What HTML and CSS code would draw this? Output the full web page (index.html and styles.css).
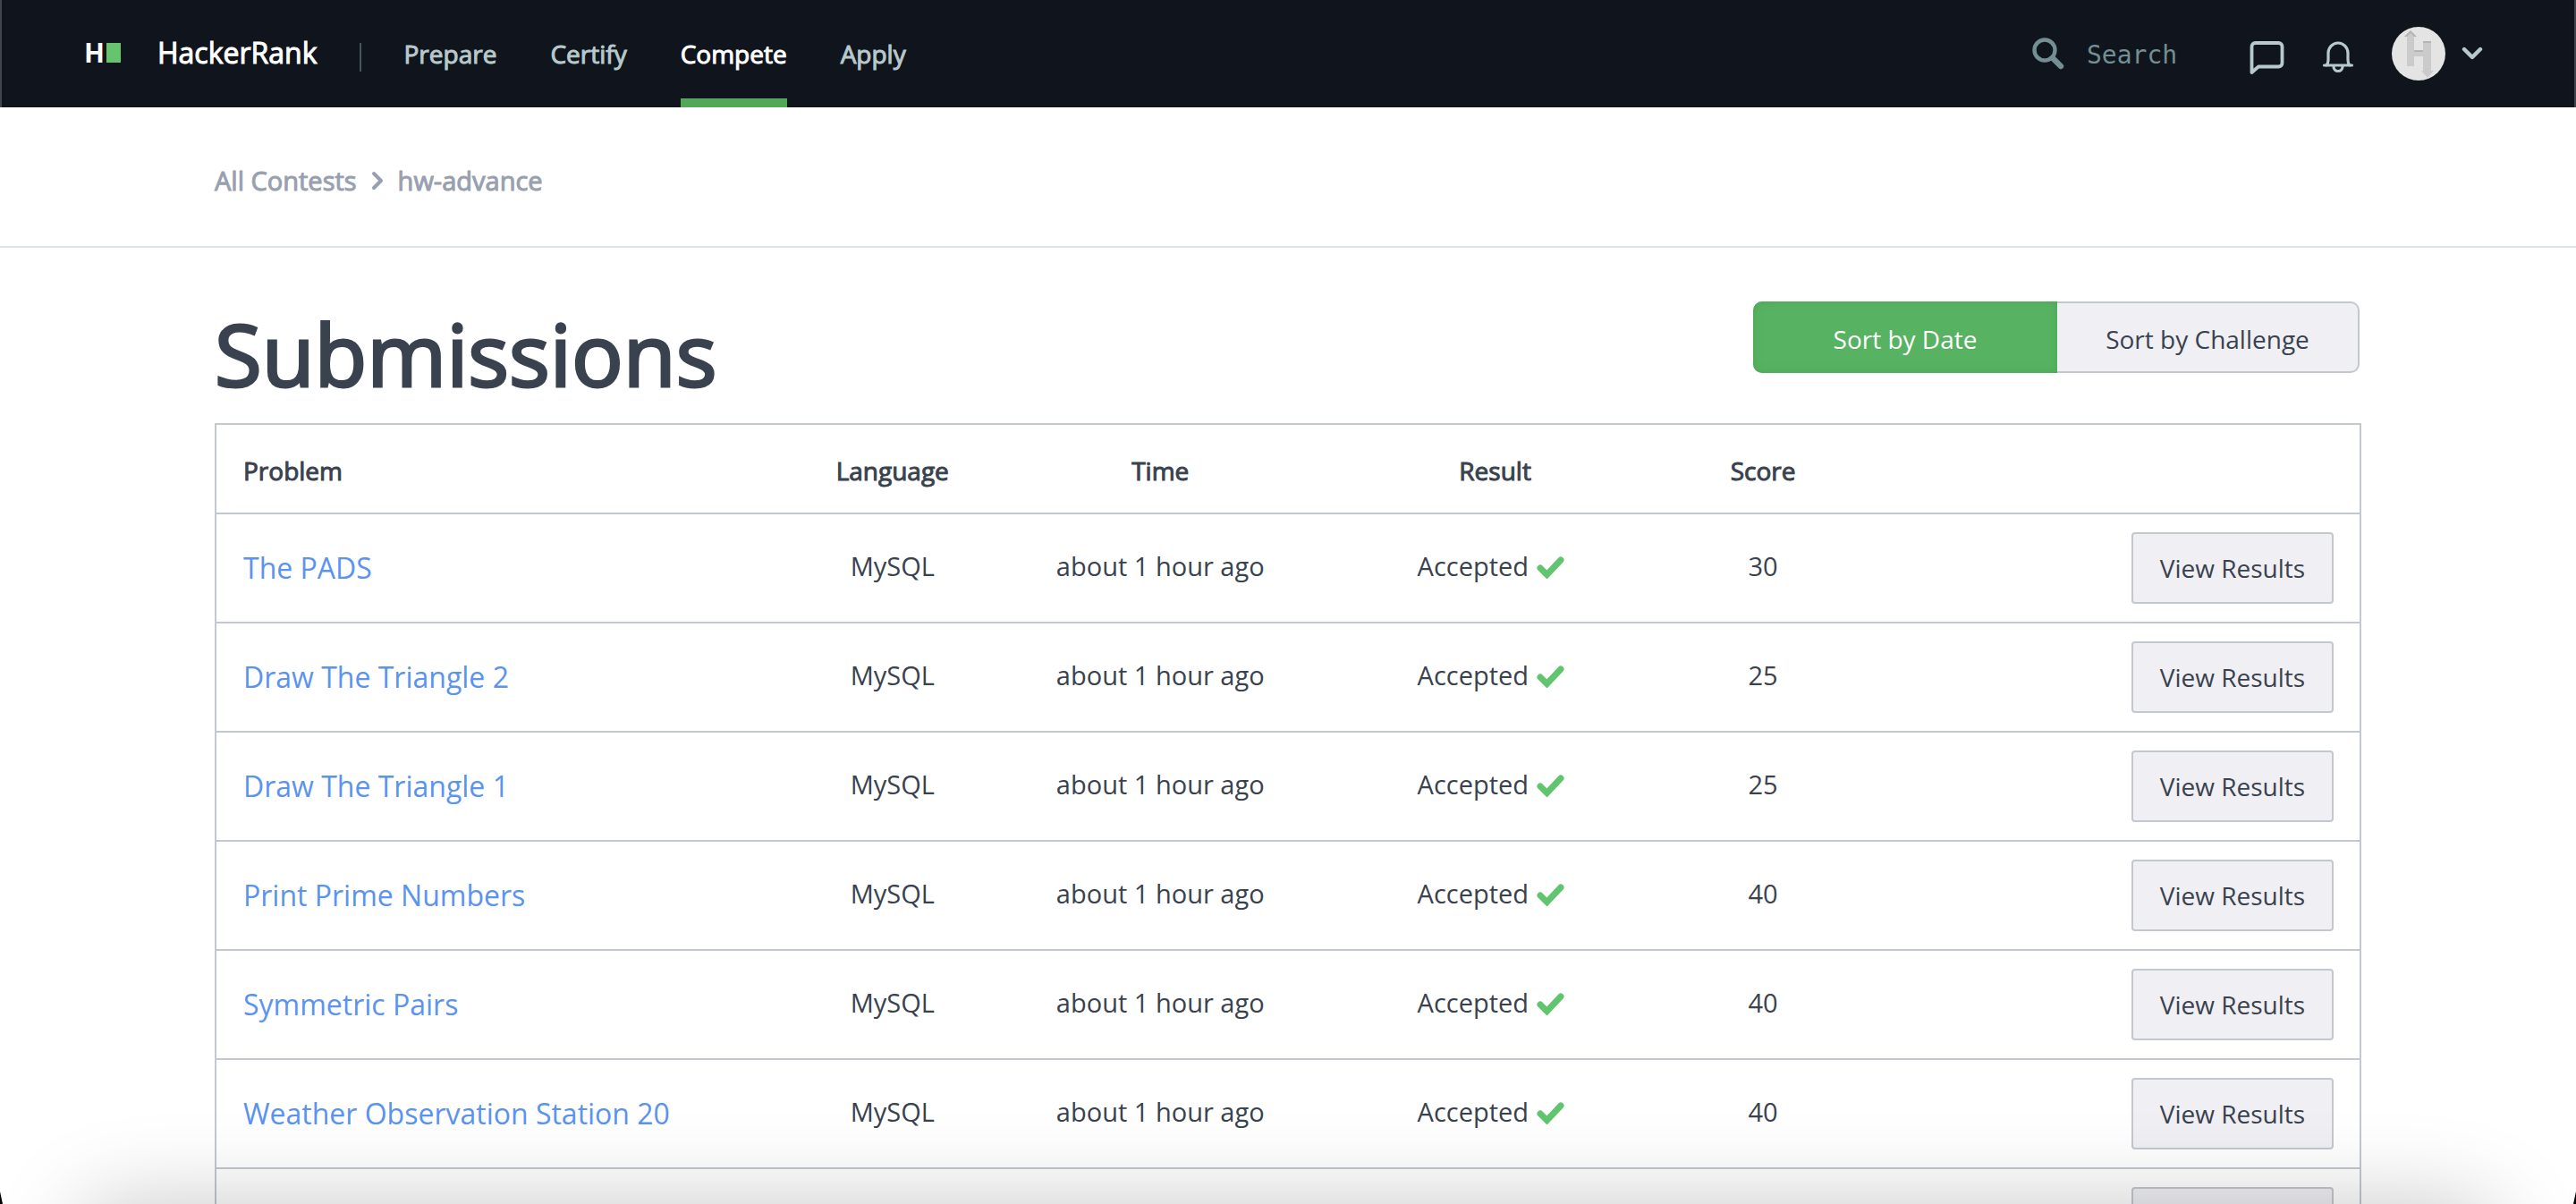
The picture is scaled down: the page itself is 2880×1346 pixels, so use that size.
FILE: index.html
```html
<!DOCTYPE html>
<html lang="en">
<head>
<meta charset="utf-8">
<title>Submissions | HackerRank</title>
<link rel="stylesheet" href="styles.css">
</head>
<body>
<header class="topbar">
  <a class="brand" href="#"><span class="brand-mark" aria-hidden="true">H<i class="brand-block"></i></span><span class="brand-name">HackerRank</span></a>
  <span class="divider"></span>
  <nav class="nav">
    <a href="#">Prepare</a>
    <a href="#">Certify</a>
    <a class="active" href="#" aria-current="page">Compete</a>
    <a href="#">Apply</a>
  </nav>
  <div class="tools">
    <label class="search">
      <svg width="36" height="36" viewBox="0 0 36 36" fill="none" stroke="#738f93" aria-hidden="true"><circle cx="14" cy="14" r="11.5" stroke-width="4.4"/><path d="M23 23l9 9" stroke-width="6.4" stroke-linecap="round"/></svg>
      <input type="search" placeholder="Search" aria-label="Search">
    </label>
    <button class="icon-btn" type="button" aria-label="Messages">
      <svg width="40" height="40" viewBox="0 0 40 40" fill="none" stroke="#b7c9cc" stroke-width="3.8" stroke-linejoin="round"><path d="M3.500 37V8a4 4 0 0 1 4-4h26a4 4 0 0 1 4 4v18.500a4 4 0 0 1-4 4H11z"/></svg>
    </button>
    <button class="icon-btn" type="button" aria-label="Notifications">
      <svg width="36" height="36" viewBox="0 0 36 36" fill="none" stroke="#b7c9cc" stroke-width="3.200" stroke-linecap="round" stroke-linejoin="round"><path d="M2.500 27h31M5 27c1.500-1.500 2-3.500 2-6v-7.500a11 11.500 0 0 1 22 0V21c0 2.500.5 4.500 2 6M13 28.500a5 5 0 0 0 10 0"/></svg>
    </button>
    <button class="profile" type="button" aria-label="Account menu">
      <svg width="60" height="60" viewBox="0 0 60 60"><circle cx="30" cy="30" r="30" fill="#e4e4e4"/><path fill="#cbcbcb" d="M21 4l7 7h-3v15h10V16h9v33h3l-7 8-7-8h2V33H25v11h-8V11h-3z"/><path fill="#b5b5b5" d="M21 4l7 7h-3l-4-4-4 4h-3zM25 26h10v2H25zM35 16h9v2h-9z"/></svg>
      <svg width="24" height="16" viewBox="0 0 24 16" fill="none" stroke="#b7c9cc" stroke-width="4.400" stroke-linecap="round" stroke-linejoin="round"><path d="M3 3l9 9 9-9"/></svg>
    </button>
  </div>
</header>
<nav class="crumbs" aria-label="Breadcrumb">
  <a href="#">All Contests</a>
  <svg width="14" height="22" viewBox="0 0 14 22" fill="none" stroke="#98a0b0" stroke-width="4" stroke-linecap="round" stroke-linejoin="round" aria-hidden="true"><path d="M3 3l8 8-8 8"/></svg>
  <a href="#">hw-advance</a>
</nav>
<main class="content">
  <div class="heading">
    <h1>Submissions</h1>
    <div class="sorter">
      <button class="selected" type="button" aria-pressed="true">Sort by Date</button>
      <button type="button" aria-pressed="false">Sort by Challenge</button>
    </div>
  </div>
  <svg class="defs" aria-hidden="true"><symbol id="check" viewBox="0 0 32 26"><path d="M5 14l7.500 7.500L28 5" fill="none" stroke="#61c46e" stroke-width="7" stroke-linecap="round" stroke-linejoin="miter"/></symbol></svg>
  <table class="submissions">
    <colgroup><col class="c-problem"><col class="c-std"><col class="c-std"><col class="c-result"><col class="c-score"><col></colgroup>
    <thead><tr><th>Problem</th><th>Language</th><th>Time</th><th>Result</th><th>Score</th><th></th></tr></thead>
    <tbody>
      <tr><td><a href="#">The PADS</a></td><td>MySQL</td><td>about 1 hour ago</td><td class="result">Accepted <svg class="check"><use href="#check"/></svg></td><td>30</td><td><button type="button">View Results</button></td></tr>
      <tr><td><a href="#">Draw The Triangle 2</a></td><td>MySQL</td><td>about 1 hour ago</td><td class="result">Accepted <svg class="check"><use href="#check"/></svg></td><td>25</td><td><button type="button">View Results</button></td></tr>
      <tr><td><a href="#">Draw The Triangle 1</a></td><td>MySQL</td><td>about 1 hour ago</td><td class="result">Accepted <svg class="check"><use href="#check"/></svg></td><td>25</td><td><button type="button">View Results</button></td></tr>
      <tr><td><a href="#">Print Prime Numbers</a></td><td>MySQL</td><td>about 1 hour ago</td><td class="result">Accepted <svg class="check"><use href="#check"/></svg></td><td>40</td><td><button type="button">View Results</button></td></tr>
      <tr><td><a href="#">Symmetric Pairs</a></td><td>MySQL</td><td>about 1 hour ago</td><td class="result">Accepted <svg class="check"><use href="#check"/></svg></td><td>40</td><td><button type="button">View Results</button></td></tr>
      <tr><td><a href="#">Weather Observation Station 20</a></td><td>MySQL</td><td>about 1 hour ago</td><td class="result">Accepted <svg class="check"><use href="#check"/></svg></td><td>40</td><td><button type="button">View Results</button></td></tr>
      <tr><td></td><td></td><td></td><td></td><td></td><td><button type="button" aria-label="View Results"></button></td></tr>
    </tbody>
  </table>
</main>
<div class="dock-shadow"></div>
<div class="corner corner-left"></div>
<div class="corner corner-right"></div>
</body>
</html>
```
FILE: styles.css
```css
* { box-sizing: border-box; }
body {
  margin: 0;
  height: 100vh;
  overflow: hidden;
  background: #fff;
  color: #39424e;
  font: 28px/40px "Open Sans", "Noto Sans", sans-serif;
}
a { color: inherit; text-decoration: none; }
button { font: inherit; color: inherit; cursor: pointer; margin: 0; }
svg { display: block; flex: none; }

.topbar {
  display: flex;
  align-items: center;
  height: 120px;
  padding: 0 102px 0 92px;
  background: #10151d;
  border: solid #41464e;
  border-width: 0 2px;
}
.brand { display: flex; align-items: center; gap: 41px; padding-bottom: 2px; color: #fff; }
.brand-mark { display: flex; align-items: center; gap: 2px; font-weight: 700; font-size: 30px; }
.brand-block { width: 16px; height: 22px; background: #66c46f; }
.brand-name { font-size: 32px; -webkit-text-stroke: 1px; }
.divider { width: 2px; height: 32px; margin: 8px 48px 0 47px; background: #4a545e; }
.nav { display: flex; align-self: stretch; gap: 60px; color: #b7c9cc; -webkit-text-stroke: 1px; }
.nav a { padding-top: 40px; border-bottom: 10px solid transparent; }
.nav .active { color: #fff; border-color: #52a759; }
.tools { display: flex; align-items: center; margin-left: auto; }
.search { display: flex; align-items: center; gap: 25px; width: 242px; }
.search input {
  width: 160px;
  padding: 4px 0 0;
  border: 0;
  outline: 0;
  background: none;
  color: #738f93;
  font: 28px/40px "DejaVu Sans Mono", monospace;
}
.search input::placeholder { color: #738f93; opacity: 1; }
.icon-btn { padding: 8px 0 0; border: 0; background: none; margin-right: 42px; }
.profile { display: flex; align-items: center; gap: 18px; padding: 0; border: 0; background: none; }

.crumbs {
  display: flex;
  align-items: center;
  gap: 16px;
  height: 157px;
  padding: 8px 240px 0;
  border-bottom: 2px solid #e0e5ea;
  color: #98a0b0;
  font-size: 29px;
  -webkit-text-stroke: 1px;
}

.content { padding: 60px 240px 0; }
.heading { display: flex; justify-content: space-between; align-items: flex-start; padding-bottom: 20px; }
h1 { margin: 0; font-size: 96px; line-height: 116px; font-weight: 400; -webkit-text-stroke: 3px; }
.sorter { display: grid; grid-template-columns: 340px 338px; padding-right: 2px; }
.sorter button {
  height: 80px;
  padding: 4px 0 0;
  border: 2px solid #c2c7d0;
  border-left: 0;
  border-radius: 0 10px 10px 0;
  background: #f0eff4;
}
.sorter .selected {
  border: 0;
  border-radius: 10px 0 0 10px;
  background: #57b262;
  color: #fff;
  box-shadow: inset 0 0 10px #4ba657;
}

.defs { width: 0; height: 0; position: absolute; }
.submissions {
  width: 100%;
  table-layout: fixed;
  border: 2px solid #c2c7d0;
  border-spacing: 0;
}
.c-problem { width: 606px; }
.c-std { width: 12.5%; }
.c-result { width: 18.75%; }
.c-score { width: 6.25%; }
th { height: 98px; padding: 4px 0 0; font-weight: 400; -webkit-text-stroke: 1px; }
td { height: 122px; padding: 0 0 4px; border-top: 2px solid #c2c7d0; text-align: center; font-size: 29px; }
th:first-child, td:first-child { padding-left: 30px; text-align: left; }
td:first-child { padding-bottom: 0; font-size: 32px; color: #5a93f0; }
td:last-child { padding: 0 29px 0 0; text-align: right; font-size: 28px; }
td.result { padding-right: 10px; }
td button {
  width: 226px;
  height: 80px;
  padding: 0;
  border: 2px solid #c2c7d0;
  border-radius: 4px;
  background: #f0eff4;
  vertical-align: middle;
}
.check { display: inline-block; width: 32px; height: 26px; vertical-align: -3px; }

.dock-shadow {
  position: fixed;
  top: 100%;
  left: 90px;
  right: 90px;
  height: 200px;
  border-radius: 40px;
  box-shadow: 0 0 100px rgba(0, 0, 0, 0.22);
}
.corner { position: fixed; bottom: 0; width: 3px; height: 14px; background: #000; }
.corner-left { left: 0; clip-path: polygon(0 0, 100% 100%, 0 100%); }
.corner-right { right: 0; clip-path: polygon(100% 0, 100% 100%, 0 100%); }
```
